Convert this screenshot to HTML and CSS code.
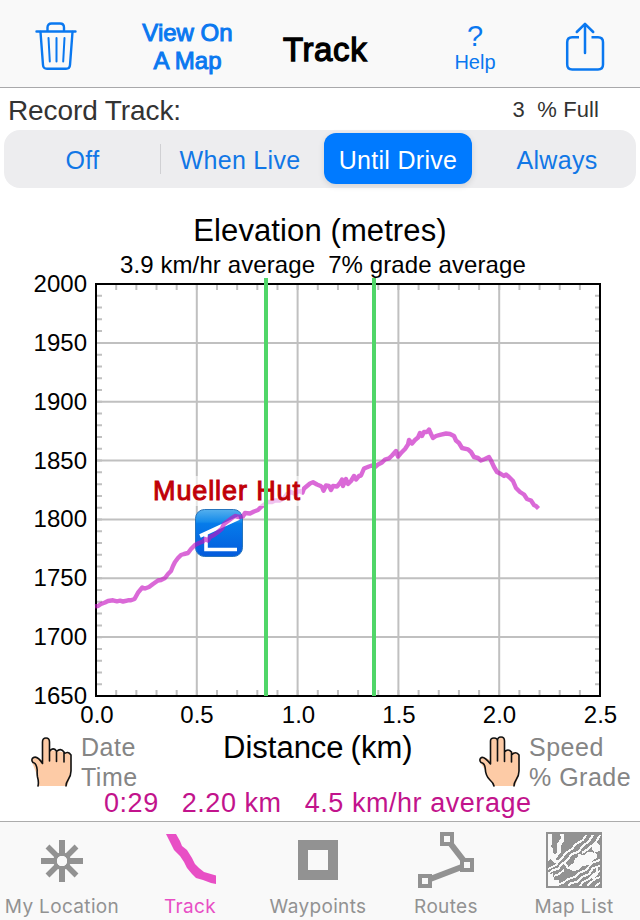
FILE: index.html
```html
<!doctype html>
<html lang="en">
<head>
    <meta charset="UTF-8">
    <meta name="viewport" content="width=device-width, initial-scale=1.0">
    <title>Track</title>
    <link rel="stylesheet" href="styles.css">
</head>
<body>
<div id="app">
    <header class="navbar">
        <a class="nav-trash">
            <svg width="42" height="50" viewBox="0 0 42 50" fill="none" stroke="#0a78f0" stroke-width="2.4" stroke-linecap="round" stroke-linejoin="round">
                <path d="M1.5 11.500H40.500M12.500 11V7.500Q12.500 3.500 16.500 3.500H25Q29 3.500 29 7.500V11"/>
                <path d="M5.500 12L8 45Q8.200 48.700 12 48.700H31Q34.800 48.700 35 45L37.500 12"/>
                <path stroke-width="2" d="M13.500 18L14.800 41.500M21.500 18V41.500M29.500 18L28.200 41.500"/>
            </svg>
        </a>
        <a class="nav-map">View On<br>A Map</a>
        <h1>Track</h1>
        <a class="nav-help"><b>?</b><span>Help</span></a>
        <a class="nav-share">
            <svg width="40" height="50" viewBox="0 0 40 50" fill="none" stroke="#0a78f0" stroke-width="2.5" stroke-linecap="round" stroke-linejoin="round">
                <path stroke-linecap="butt" d="M14 16.200H7.200Q2.200 16.200 2.200 21.200V43.500Q2.200 48.500 7.200 48.500H33Q38 48.500 38 43.500V21.200Q38 16.200 33 16.200H26.500"/>
                <path d="M20 32V3M11.800 11L20 2.800L28.200 11"/>
            </svg>
        </a>
    </header>

    <div class="record">
        <span class="record-label">Record Track:</span>
        <span class="record-full">3&nbsp; % Full</span>
    </div>

    <div class="segments">
        <button type="button" class="seg seg-off">Off</button>
        <button type="button" class="seg seg-live">When Live</button>
        <button type="button" class="seg seg-drive active">Until Drive</button>
        <button type="button" class="seg seg-always">Always</button>
    </div>

    <main class="chart">
        <h2>Elevation (metres)</h2>
        <p class="averages"><span>3.9 km/hr average</span><span class="grade">7% grade average</span></p>

        <svg class="plot" width="640" height="452" viewBox="0 278 640 452">
            <defs>
                <linearGradient id="sign" x1="0" y1="0" x2="0" y2="1">
                    <stop offset="0" stop-color="#55b0ee"/>
                    <stop offset=".26" stop-color="#168bea"/>
                    <stop offset=".3" stop-color="#067bea"/>
                    <stop offset="1" stop-color="#045bdc"/>
                </linearGradient>
            </defs>

            <!-- grid and minor ticks -->
            <g stroke="#c0c0c0" stroke-width="2" fill="none">
                <path d="M196.800 285V695M297.600 285V695M398.400 285V695M499.200 285V695"/>
                <path d="M97 342.900H600M97 401.700H600M97 460.600H600M97 519.400H600M97 578.300H600M97 637.100H600"/>
                <path stroke-width="5" stroke-dasharray="2 18.160" d="M115.200 287.500H599M115.200 692.500H599"/>
                <path stroke-width="5" stroke-dasharray="2 9.771" d="M99.500 294.800V695M597.500 294.800V695"/>
            </g>
            <rect x="96" y="284" width="504" height="412" fill="none" stroke="#000" stroke-width="2"/>

            <!-- hut sign -->
            <rect x="195.500" y="509.500" width="47" height="47" rx="9" fill="url(#sign)" stroke="#2675bd"/>
            <path d="M200 536L239 518M206 534V549.500H237" fill="none" stroke="#fff" stroke-width="3.600"/>

            <polyline class="track" points="95,606.300 98,606 101,604 105,602.500 108,601 113,600.300 117,601.300 120,600.700 123,601.500 128,600.300 131,600.300 134.500,599 138,592.700 142.300,587.500 145,588.500 149,587 153,584 158,580.500 161,580 165,578 168,574 171,571 173,566 175,562 178,558 181,555 184,554 188,553 191,549 195,545 199,543 203,541.500 205,539 208,540.500 210,537 214,535 218,532 222,528.500 224,524 228,521 232,518 235,516 239,517 243,516.300 245,513 250,513.500 254,511.500 258,510 261,507 265,504 268,502 272,502 275,500.500 280,500.500 284,498 287,494 291,492 294,493.500 297,492 300,491 302.500,492.500 304,488.500 307,486 310,483.500 313,482.300 317,484.500 320,485.700 322,487 323.500,490.700 326,485.500 329,486 331,490 333,486 337,486.500 340,483 342,479.500 343,486 346,479 348,484 351,481 354,476 356,479.500 359,476 361,475.500 364,468.500 369,466.500 372,465.500 375,467 378,464.500 382,462.500 385,459.500 389,458.300 392,455.500 396,451 398,456.500 401,453 405,449 408,444.500 409,440 412,443.500 415,440 418,437.500 420,433 422,436 424,432 427,432 429,429.500 431,434 433,438 436,436 440,434.800 446,433.500 450,434 454,436 456,440.500 459,443 462,448 468,449.300 471,452 474,457 478,458 481,460.500 485,459 489,457 491,460.500 494,467 497,472 501,474 504,476 506,474.500 509,477 513,481 516,488 520,492 524,494.500 527,499 531,500.500 534,505 536,506 538.500,508.500"/>

            <rect x="151" y="476" width="151" height="30" fill="#fff" fill-opacity=".6"/>
            <text class="place" x="153" y="499.500" textLength="147">Mueller Hut</text>

            <path d="M266 278V696M374 278V696" stroke="#50d668" stroke-width="4"/>

            <g class="axis axis-y">
                <text x="87" y="291.500">2000</text>
                <text x="87" y="350.800">1950</text>
                <text x="87" y="409.700">1900</text>
                <text x="87" y="468.500">1850</text>
                <text x="87" y="527.400">1800</text>
                <text x="87" y="586.200">1750</text>
                <text x="87" y="645.100">1700</text>
                <text x="87" y="703.500">1650</text>
            </g>
            <g class="axis axis-x">
                <text x="97" y="723">0.0</text>
                <text x="197" y="723">0.5</text>
                <text x="298.500" y="723">1.0</text>
                <text x="399" y="723">1.5</text>
                <text x="499.500" y="723">2.0</text>
                <text x="600.500" y="723">2.5</text>
            </g>
        </svg>

        <div class="legend">
            <div class="hint hint-date">
                <svg width="42" height="52" viewBox="0 0 42 52" fill="#fdcba6" stroke="#111" stroke-width="1.600" stroke-linejoin="round" stroke-linecap="round">
                    <path stroke="none" d="M7 50Q8 43 6 39L1 26Q0 21 5 21L11 24V5Q15-1 19 5V14L38 17Q41 20 40 36Q39 43 36 50Z"/>
                    <path d="M7 50Q8 46 6.500 41Q6 38 6.200 34Q5.500 27 2 26.500Q-.5 23.500 2.500 21.500Q6.500 19.500 11.500 27.500V6Q11.500 2 15 2T18.500 6V25M18.500 15.500Q22 10.500 25.500 15V25.500M25.500 15.500Q29.500 11.500 33 16V26M33 18Q37 14.500 40 19V35Q40 40 37 44Q35 47 35 50" fill="none"/>
                </svg>
                <p>Date<br>Time</p>
            </div>
            <h3>Distance<span>(km)</span></h3>
            <div class="hint hint-speed">
                <svg width="42" height="52" viewBox="0 0 42 52" fill="#fdcba6" stroke="#111" stroke-width="1.600" stroke-linejoin="round" stroke-linecap="round">
                    <path stroke="none" d="M15 50Q15 47 10 44Q7 40 6 34L1 26Q0 21 5 21L11 24V5Q15-1 19 5Q22-2 26 4V14L38 17Q41 20 40 36Q39 43 36 50Z"/>
                    <path d="M15 50Q14.500 47 11 44Q6.500 40 6.200 32Q5.500 27 2 26.500Q-.5 23.500 2.500 21.500Q5.500 20.500 11.500 28V5Q11.500 2 15 2T18.500 5V25M18.500 5Q18.500 1 22 1T25.500 5V25.500M25.500 16Q29 12 32.500 16V26M32.500 19Q37 14.500 40 19V35Q40 40 37 44Q35 47 35 50" fill="none"/>
                </svg>
                <p>Speed<br>% Grade</p>
            </div>
        </div>

        <p class="summary"><span>0:29</span><span>2.20 km</span><span>4.5 km/hr average</span></p>
    </main>

    <nav class="tabbar">
        <a class="tab tab-location">
            <svg width="56" height="56" viewBox="0 0 56 56" fill="none" stroke="#929292" stroke-width="6">
                <circle cx="28" cy="29" r="7" stroke-width="3.500"/>
                <path d="M28 8V24M28 34V50M7 29H23M33 29H49"/>
                <path stroke-width="5.500" d="M13.500 14.500L24 25M32 33L42.500 43.500M13.500 43.500L24 33M32 25L42.500 14.500"/>
                <circle cx="28" cy="29" r="5" fill="#f9f9f9" stroke="none"/>
            </svg>
            <span>My Location</span>
        </a>
        <a class="tab tab-track active">
            <svg width="56" height="56" viewBox="0 0 56 56">
                <path d="M4 2H14L18 9L20 14L25 18L30 26L33 32L37 36L42 40L54 43.500V52L49 51L41 48L34 46L30 42L25 36L22 30L18 24L12 18L8 10Z" fill="#e84fc5"/>
            </svg>
            <span>Track</span>
        </a>
        <a class="tab tab-waypoints">
            <svg width="56" height="56" viewBox="0 0 56 56">
                <rect x="13" y="13" width="30" height="30" fill="none" stroke="#929292" stroke-width="10"/>
            </svg>
            <span>Waypoints</span>
        </a>
        <a class="tab tab-routes">
            <svg width="56" height="56" viewBox="0 0 56 56" stroke="#929292" fill="#f9f9f9">
                <path stroke-width="6" fill="none" d="M29 7L49 33L7 49"/>
                <path stroke-width="4" d="M24 2H34V12H24ZM44 28H54V38H44ZM2 44H12V54H2Z"/>
            </svg>
            <span>Routes</span>
        </a>
        <a class="tab tab-maps">
            <svg width="56" height="56" viewBox="0 0 56 56" shape-rendering="crispEdges">
                <path fill="#929292" d="M0 0H56V56H0Z"/>
                <path fill="#f9f9f9" d="M2 2H6V12L5 15L7 17V21L10 24V28L14 29L12 32L7 30L5 27L2 29ZM14 2H18V9L15 14V20L12 24L9 29L7 25L11 20V12L15 6ZM24 37L23 34L28 31L29 26L32 25V22L38 23L41 20H46L51 22V26L46 29L42 33L37 34L32 38L27 39ZM46 18V14L51 11L54 14V19L49 20ZM2 43L7 41L8 48H13V54H2Z"/>
                <path fill="none" stroke="#f9f9f9" stroke-width="2" d="M40 3L37 8L30 12L26 17L21 20L14 28L10 33L2 37M47 3L43 9L37 14L32 20L26 22L21 28L16 32L12 37L7 38L2 42M54 3L50 10L42 17L36 21M18 30L22 36L27 37M18 38L13 42L8 44M54 28L46 31L40 38L33 41L29 45L22 47L17 51L13 52M54 34L47 36L43 42L36 45L31 50L25 51L22 54M54 39L48 42L43 47L37 50L34 54M54 45L49 47L44 51L41 54M54 51L49 54M51 35V42L46 47M52 12V18L48 20"/>
            </svg>
            <span>Map List</span>
        </a>
    </nav>
</div>
</body>
</html>
```
FILE: styles.css
```css
* {
    margin: 0;
    padding: 0;
    box-sizing: border-box;
}

body {
    background: #fff;
    font-family: "Liberation Sans", Arial, sans-serif;
    color: #000;
}

svg {
    display: block;
    flex: none;
}

#app {
    width: 640px;
    height: 920px;
    overflow: hidden;
    display: flex;
    flex-direction: column;
    white-space: nowrap;
}

/* top bar */
.navbar {
    height: 88px;
    flex: none;
    display: grid;
    grid-template-columns: 118px 139px 138px 160px 85px;
    background: #f9f9f9;
    border-bottom: 1px solid #a9a9ab;
    color: #0a78f0;
}

.nav-trash {
    padding: 20px 0 0 35px;
}

.nav-map {
    padding-top: 19px;
    text-align: center;
    font-size: 24px;
    line-height: 28px;
    -webkit-text-stroke: 1px #0a78f0;
}

.navbar h1 {
    padding: 31px 0 0 26px;
    font-size: 33px;
    line-height: 37px;
    font-weight: normal;
    letter-spacing: 0.6px;
    color: #000;
    -webkit-text-stroke: 1.3px #000;
}

.nav-help {
    padding-top: 21px;
    display: flex;
    flex-direction: column;
    align-items: center;
    font-size: 20px;
    line-height: 22px;
}

.nav-help b {
    font-size: 29px;
    line-height: 30px;
    font-weight: normal;
}

.nav-share {
    padding: 21px 0 0 10px;
}

/* record row */
.record {
    height: 42px;
    flex: none;
    display: flex;
    justify-content: space-between;
    padding: 0 41px 0 8px;
    color: #333;
}

.record-label {
    font-size: 28px;
    line-height: 46px;
    letter-spacing: -0.1px;
}

.record-full {
    font-size: 22px;
    line-height: 43px;
    letter-spacing: 0.1px;
}

.segments {
    height: 58px;
    flex: none;
    margin: 0 4px;
    padding: 3px 0 4px;
    display: grid;
    grid-template-columns: 157px 163px 148px 164px;
    background: #ededef;
    border-radius: 16px;
}

.seg {
    border: none;
    padding-top: 3px;
    background: none;
    font-family: inherit;
    font-size: 25px;
    letter-spacing: 0.3px;
    color: #1177e6;
}

.seg-off {
    background: linear-gradient(#d0d0d3, #d0d0d3) right center / 1px 30px no-repeat;
}

.seg-live {
    padding-right: 5px;
}

.seg-always {
    padding-left: 6px;
}

.seg.active {
    border-radius: 12px;
    background: #007aff;
    color: #fff;
    box-shadow: 0 2px 6px rgba(0,0,0,0.12);
}

/* elevation chart */
.chart {
    height: 633px;
    flex: none;
}

.chart h2 {
    height: 60px;
    padding-top: 25px;
    font-size: 31px;
    line-height: 36px;
    font-weight: normal;
    letter-spacing: 0.1px;
    text-align: center;
}

.averages {
    height: 30px;
    padding: 3px 0 0 120px;
    display: flex;
    gap: 13px;
    font-size: 24px;
    line-height: 27px;
    letter-spacing: 0.1px;
}

/* the top axis label sits on the edge of the plot */
.plot {
    overflow: visible;
}

.track {
    fill: none;
    stroke: #c411c0;
    stroke-opacity: .63;
    stroke-width: 4.4;
    stroke-linejoin: round;
}

.place {
    font-size: 27px;
    fill: #c00008;
    stroke: #c00008;
    stroke-width: 1px;
}

.axis {
    font-size: 24px;
}

.axis-y {
    text-anchor: end;
}

.axis-x {
    text-anchor: middle;
}

.legend {
    height: 58px;
    display: grid;
    grid-template-columns: 223px 256px 161px;
}

.legend h3 {
    font-size: 31px;
    line-height: 36px;
    font-weight: normal;
}

.legend h3 span {
    margin-left: 7px;
}

.hint {
    display: flex;
    gap: 8px;
    padding-top: 6px;
    font-size: 25px;
    line-height: 30px;
    letter-spacing: 0.5px;
    color: #858585;
}

.hint-date {
    padding-left: 31px;
}

.hint p {
    margin-top: -4px;
}

.summary {
    padding-left: 104px;
    display: flex;
    gap: 23px;
    font-size: 27px;
    line-height: 30px;
    letter-spacing: 0.55px;
    color: #c2138c;
}

/* bottom tabs */
.tabbar {
    height: 99px;
    flex: none;
    display: grid;
    grid-template-columns: repeat(5, 128px);
    margin-left: -2px;
    margin-right: -2px;
    padding-right: 2px;
    background: #f9f9f9;
    border-top: 1px solid #acacac;
}

.tab {
    display: flex;
    flex-direction: column;
    align-items: center;
    padding-top: 10px;
    font-family: Inter, sans-serif;
    font-size: 19px;
    line-height: 24px;
    letter-spacing: 0.35px;
    color: #929292;
}

.tab span {
    margin-top: 7px;
}

.tab.active {
    color: #e84fc5;
}
```
